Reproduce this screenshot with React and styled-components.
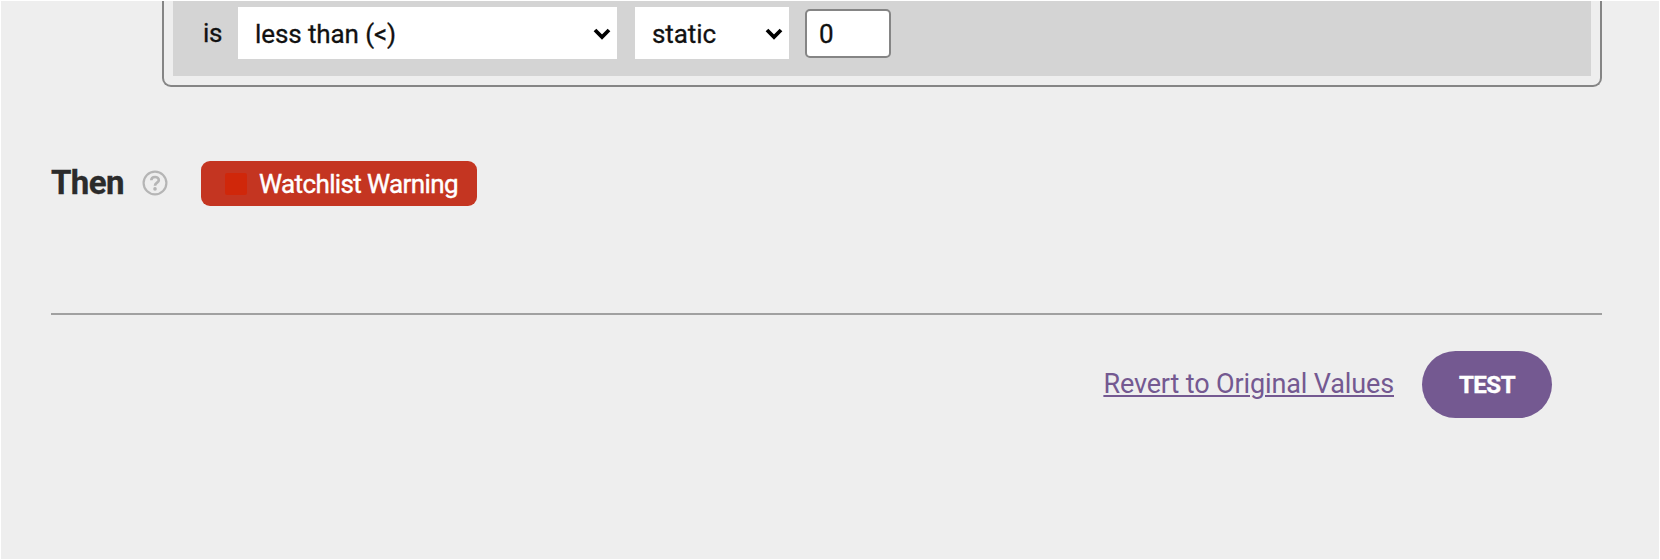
import styled, { createGlobalStyle } from 'styled-components';
import { useState } from 'react';

const GlobalStyle = createGlobalStyle`
  * {
    box-sizing: border-box;
  }
  body {
    margin: 0;
    background-color: #eeeeee;
    font-family: Roboto, "Liberation Sans", sans-serif;
  }
`;

const Page = styled.div`
  display: flex;
  flex-direction: column;
  height: 560px;
  padding: 0 57px 0 50px;
  border: 1px solid white;
  overflow: hidden;
`;

const Panel = styled.div`
  height: 86px;
  margin-left: 111px;
  padding: 0 9px 9px;
  border: 2px solid #858585;
  border-top: none;
  border-radius: 0 0 9px 9px;
`;

const Condition = styled.div`
  display: flex;
  align-items: flex-start;
  height: 75px;
  padding: 6px 0 0 30px;
  background-color: #d4d4d4;
  font-size: 26px;
  color: #111;
  -webkit-text-stroke: 0.3px #111;
`;

const Word = styled.span`
  width: 35px;
  line-height: 53px;
  letter-spacing: -0.3px;
`;

const SelectBox = styled.div`
  position: relative;
  width: ${(props) => props.$width}px;
  height: 52px;
  margin-right: 18px;
`;

const Select = styled.select`
  appearance: none;
  width: 100%;
  height: 100%;
  padding: 1px 40px 0 17px;
  border: none;
  border-radius: 0;
  background-color: white;
  color: #111;
  font: inherit;
  letter-spacing: -0.1px;
  -webkit-text-stroke: 0.3px #111;
`;

const Chevron = styled.svg`
  position: absolute;
  right: 6px;
  top: 20px;
  width: 18px;
  height: 14px;
  pointer-events: none;
`;

const NumberInput = styled.input`
  width: 86px;
  height: 49px;
  margin: 2px 0 0 -2px;
  padding: 0 12px;
  border: 2px solid #858585;
  border-radius: 5px;
  background-color: white;
  color: #111;
  font: inherit;
  -webkit-text-stroke: 0.3px #111;
`;

const ThenRow = styled.div`
  display: flex;
  align-items: center;
  height: 45px;
  margin-top: 74px;
`;

const Heading = styled.h2`
  width: 91px;
  margin: -3px 0 0;
  font-size: 33px;
  font-weight: 700;
  letter-spacing: -0.6px;
  color: #2b2b2b;
  -webkit-text-stroke: 0.3px #2b2b2b;
`;

const HelpIcon = styled.svg`
  width: 26px;
  height: 26px;
  margin: -2px 33px 0 0;
`;

const Badge = styled.div`
  display: flex;
  align-items: center;
  width: 276px;
  height: 45px;
  padding-left: 24px;
  border-radius: 9px;
  background-color: #c43521;
  color: white;
  font-size: 26px;
  letter-spacing: -0.62px;
  white-space: nowrap;
  -webkit-text-stroke: 0.4px white;
`;

const Swatch = styled.span`
  width: 22px;
  height: 22px;
  margin-right: 12px;
  border-radius: 2px;
  background-color: #d0270a;
`;

const Divider = styled.hr`
  width: 100%;
  height: 2px;
  margin: 107px 0 0;
  border: none;
  background-color: #a0a0a0;
`;

const Actions = styled.div`
  display: flex;
  justify-content: flex-end;
  align-items: center;
  margin-top: 36px;
  padding-right: 50px;
`;

const Revert = styled.a`
  margin: -2px 28px 0 0;
  font-size: 27px;
  letter-spacing: -0.13px;
  color: #745991;
  text-decoration: underline;
  text-decoration-thickness: 2px;
  text-underline-offset: 2px;
  cursor: pointer;
`;

const TestButton = styled.button`
  width: 130px;
  height: 67px;
  padding: 0;
  border: none;
  border-radius: 34px;
  background-color: #745991;
  color: white;
  font-family: inherit;
  font-size: 24px;
  font-weight: 700;
  letter-spacing: -0.5px;
  -webkit-text-stroke: 0.4px white;
`;

function Dropdown({ width, value, options, onChange }) {
  return (
    <SelectBox $width={width}>
      <Select value={value} onChange={(e) => onChange(e.target.value)}>
        {options.map((option) => <option key={option}>{option}</option>)}
      </Select>
      <Chevron viewBox="0 0 18 14">
        <path d="M2 3L9 10L16 3" fill="none" stroke="#000" strokeWidth="3.8" />
      </Chevron>
    </SelectBox>
  );
}

function App() {
  const [operator, setOperator] = useState('less than (<)');
  const [source, setSource] = useState('static');
  const [amount, setAmount] = useState('0');

  const handleRevert = () => {
    setOperator('less than (<)');
    setSource('static');
    setAmount('0');
  };

  return (
    <>
      <GlobalStyle />
      <Page>
        <Panel>
          <Condition>
            <Word>is</Word>
            <Dropdown
              width={379}
              value={operator}
              options={['less than (<)', 'greater than (>)']}
              onChange={setOperator}
            />
            <Dropdown
              width={154}
              value={source}
              options={['static', 'field']}
              onChange={setSource}
            />
            <NumberInput value={amount} onChange={(e) => setAmount(e.target.value)} />
          </Condition>
        </Panel>
        <ThenRow>
          <Heading>Then</Heading>
          <HelpIcon viewBox="0 0 26 26" fill="none" stroke="#b5b5b5">
            <circle cx="13" cy="13" r="11.4" strokeWidth="2.2" />
            <path d="M9.3 10.3C9.3 5.9 16.8 5.9 16.8 10.2C16.8 12.8 13 12.5 13 15.8" strokeWidth="2.7" />
            <circle cx="13" cy="18.9" r="1.8" fill="#b5b5b5" stroke="none" />
          </HelpIcon>
          <Badge>
            <Swatch />
            Watchlist Warning
          </Badge>
        </ThenRow>
        <Divider />
        <Actions>
          <Revert onClick={handleRevert}>Revert to Original Values</Revert>
          <TestButton>TEST</TestButton>
        </Actions>
      </Page>
    </>
  );
}

export default App;
